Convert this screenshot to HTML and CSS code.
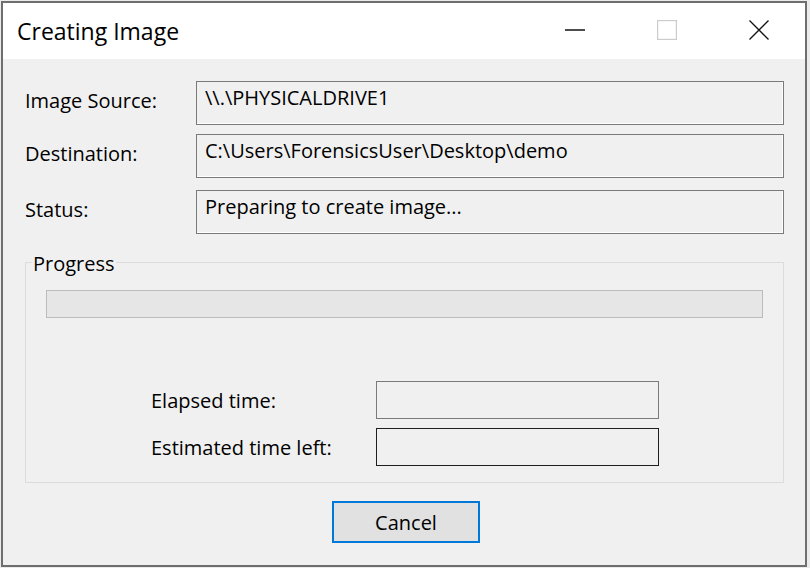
FILE: index.html
```html
<!DOCTYPE html>
<html>
<head>
<meta charset="utf-8">
<title>Creating Image</title>
<link rel="stylesheet" href="styles.css">
</head>
<body>
<div class="window">
  <div class="titlebar">
    <div class="title">Creating Image</div>
    <div class="caption-buttons">
      <div class="cap-btn">
        <svg width="20" height="20" viewBox="0 0 20 20"><path d="M0 10H20" stroke="#000" stroke-width="1.4"/></svg>
      </div>
      <div class="cap-btn">
        <svg width="20" height="20" viewBox="0 0 20 20"><rect x="0.6" y="0.6" width="18.8" height="18.8" fill="none" stroke="#cccccc" stroke-width="1.2"/></svg>
      </div>
      <div class="cap-btn">
        <svg width="20" height="20" viewBox="0 0 20 20"><path d="M0.5 0.5L19.5 19.5M19.5 0.5L0.5 19.5" stroke="#111" stroke-width="1.3"/></svg>
      </div>
    </div>
  </div>
  <div class="content">
    <div class="row">
      <div class="label">Image Source:</div>
      <div class="field">\\.\PHYSICALDRIVE1</div>
    </div>
    <div class="row">
      <div class="label">Destination:</div>
      <div class="field">C:\Users\ForensicsUser\Desktop\demo</div>
    </div>
    <div class="row row-status">
      <div class="label">Status:</div>
      <div class="field">Preparing to create image...</div>
    </div>
    <fieldset class="group">
      <legend class="group-title">Progress</legend>
      <div class="group-body">
        <div class="bar"></div>
        <div class="times">
          <div class="time-label">Elapsed time:</div>
          <div class="time-box"></div>
          <div class="time-label">Estimated time left:</div>
          <div class="time-box focused"></div>
        </div>
      </div>
    </fieldset>
    <div class="actions">
      <button class="btn">Cancel</button>
    </div>
  </div>
</div>
</body>
</html>
```
FILE: styles.css
```css
body {
  margin: 0;
  background: #ebebeb;
  font-family: "Open Sans", "Noto Sans", sans-serif;
  color: #000;
}

.window {
  margin: 1px 0 0 1px;
  width: 806px;
  height: 566px;
  box-sizing: border-box;
  border: 2px solid #6e6e6e;
  background: #f0f0f0;
  display: flex;
  flex-direction: column;
}

.titlebar {
  height: 56px;
  background: #fff;
  display: flex;
  align-items: center;
}

.title {
  flex: 1;
  padding-left: 14px;
  font-size: 23px;
  line-height: 30px;
}

.caption-buttons {
  align-self: stretch;
  display: flex;
  padding-bottom: 3px;
}

.cap-btn {
  width: 92px;
  display: flex;
  align-items: center;
  justify-content: center;
}

.cap-btn svg {
  display: block;
}

.content {
  padding: 22px 21px 0 22px;
  font-size: 20px;
}

.row {
  display: grid;
  grid-template-columns: 171px 1fr;
}

.row + .row {
  margin-top: 9px;
}

.row.row-status {
  margin-top: 12px;
}

.label {
  padding-top: 6px;
  line-height: 28px;
}

.field {
  height: 44px;
  box-sizing: border-box;
  border: 1px solid #7a7a7a;
  box-shadow: inset -1px -1px 0 #fff;
  padding: 2px 8px 0;
  line-height: 28px;
  white-space: nowrap;
}

.group {
  margin: 12px 0 0;
  padding: 0;
  min-width: 0;
  border: 1px solid #dcdcdc;
}

.group-title {
  margin-left: 6px;
  padding: 4px 1px 0;
  line-height: 28px;
}

.group-body {
  padding: 12px 20px 16px;
}

.bar {
  height: 28px;
  box-sizing: border-box;
  border: 1px solid #bcbcbc;
  background: #e6e6e6;
}

.times {
  margin-top: 63px;
  padding-left: 105px;
  display: grid;
  grid-template-columns: 225px 283px;
  row-gap: 9px;
  align-items: center;
}

.time-label {
  line-height: 28px;
  padding-top: 2px;
}

.time-box {
  height: 38px;
  box-sizing: border-box;
  border: 1px solid #7a7a7a;
}

.time-box.focused {
  border-color: #1e1e1e;
}

.actions {
  margin-top: 18px;
  display: flex;
  justify-content: center;
  padding-left: 3px;
}

.btn {
  width: 148px;
  height: 42px;
  box-sizing: border-box;
  border: 2px solid #0078d7;
  background: #e1e1e1;
  font: inherit;
  font-size: 20px;
  color: #000;
  padding: 0;
}
```
